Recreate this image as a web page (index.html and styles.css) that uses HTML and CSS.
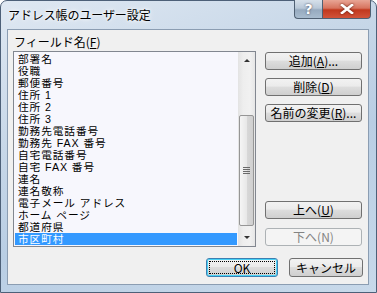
FILE: index.html
```html
<!DOCTYPE html>
<html lang="ja">
<head>
    <meta charset="utf-8">
    <title>アドレス帳のユーザー設定</title>
    <link rel="stylesheet" href="styles.css">
</head>
<body>
<div class="window">
    <div class="titlebar">
        <span class="title">アドレス帳のユーザー設定</span>
        <div class="caption-buttons">
            <span class="cap help">?</span>
            <span class="cap close">
                <svg width="14" height="10" viewBox="0 0 14 10">
                    <path d="M2 1 L12 9 M12 1 L2 9" stroke="#fff" stroke-width="2.6" stroke-linecap="square"/>
                </svg>
            </span>
        </div>
    </div>
    <div class="client">
        <div class="main">
            <div class="fields">
                <div class="label">フィールド名(<u>F</u>)</div>
                <div class="listbox">
                    <ul class="items">
                        <li>部署名</li>
                        <li>役職</li>
                        <li>郵便番号</li>
                        <li>住所 1</li>
                        <li>住所 2</li>
                        <li>住所 3</li>
                        <li>勤務先電話番号</li>
                        <li>勤務先 FAX 番号</li>
                        <li>自宅電話番号</li>
                        <li>自宅 FAX 番号</li>
                        <li>連名</li>
                        <li>連名敬称</li>
                        <li>電子メール アドレス</li>
                        <li>ホーム ページ</li>
                        <li>都道府県</li>
                        <li class="selected">市区町村</li>
                    </ul>
                    <div class="scrollbar">
                        <div class="arrow up"></div>
                        <div class="track">
                            <div class="thumb"><span class="grip"></span></div>
                        </div>
                        <div class="arrow down"></div>
                    </div>
                </div>
            </div>
            <div class="side">
                <div class="group">
                    <button class="btn">追加(<u>A</u>)...</button>
                    <button class="btn">削除(<u>D</u>)</button>
                    <button class="btn">名前の変更(<u>R</u>)...</button>
                </div>
                <div class="group move">
                    <button class="btn">上へ(<u>U</u>)</button>
                    <button class="btn" disabled>下へ(N)</button>
                </div>
            </div>
        </div>
        <div class="footer">
            <button class="btn default"><span class="focus">OK</span></button>
            <button class="btn cancel">キャンセル</button>
        </div>
    </div>
</div>
</body>
</html>
```
FILE: styles.css
```css
body {
    margin: 0;
    font-family: "Noto Sans CJK JP", "Noto Sans", sans-serif;
    font-size: 12px;
    color: #000;
}
.window {
    width: 377px;
    height: 293px;
    box-sizing: border-box;
    border: 1px solid #4d6078;
    border-radius: 7px 7px 0 0;
    background: linear-gradient(160deg, #dfe8f2 0%, #c7d7e8 35%, #b9cee4 60%, #c8d9ea 100%);
    display: flex;
    flex-direction: column;
}
.titlebar {
    height: 28px;
    display: flex;
    justify-content: space-between;
    align-items: flex-start;
}
.title {
    margin: 6px 0 0 7px;
    font-size: 12px;
    line-height: 16px;
    letter-spacing: -0.1px;
    text-shadow: 0 0 6px #fff, 0 0 3px #fff;
}
.caption-buttons {
    display: flex;
    margin-right: 5px;
    margin-top: -1px;
}
.cap {
    height: 19px;
    box-sizing: border-box;
    border: 1px solid #4f6073;
    border-top: none;
    display: flex;
    align-items: center;
    justify-content: center;
    color: #fff;
    font-weight: bold;
    font-size: 14px;
}
.help {
    width: 28px;
    border-radius: 0 0 0 4px;
    border-right: none;
    background: linear-gradient(#d6e0ea 0%, #b9c8d8 45%, #96aabf 55%, #a8bccf 100%);
    text-shadow: 0 0 2px #334;
    font-family: "DejaVu Sans", sans-serif;
}
.close {
    width: 49px;
    border-radius: 0 0 4px 0;
    background: linear-gradient(#e8a595 0%, #d7745f 45%, #c1381d 55%, #d2533a 100%);
}
.close svg {
    filter: drop-shadow(0 0 1px #5a1a10);
}
.client {
    flex: 1;
    margin: 0 7px 7px 6px;
    border: 1px solid #8b9db2;
    background: #f0f0f0;
    display: flex;
    flex-direction: column;
    padding: 0 5px 0 5px;
}
.main {
    display: flex;
}
.fields {
    width: 243px;
}
.label {
    margin-top: 5px;
    height: 14px;
    line-height: 14px;
    margin-bottom: 2px;
    padding-left: 1px;
}
.listbox {
    height: 196px;
    box-sizing: border-box;
    border: 1px solid #828790;
    background: #f7f7fd;
    display: flex;
}
.items {
    list-style: none;
    margin: 0;
    padding: 1px 1px 0 1px;
    flex: 1;
}
.items li {
    height: 12px;
    line-height: 12px;
    padding-left: 3px;
    font-family: "Liberation Sans", "Noto Sans CJK JP", sans-serif;
    font-size: 10.7px;
    letter-spacing: 0.9px;
    white-space: nowrap;
}
.items li.selected {
    background: #3399ff;
    color: #fff;
}
.scrollbar {
    width: 17px;
    display: flex;
    flex-direction: column;
    background: linear-gradient(90deg, #e3e3e3, #eeeeee 30%, #f1f1f1 70%, #e6e6e6);
}
.arrow {
    height: 17px;
    display: flex;
    align-items: center;
    justify-content: center;
}
.arrow::before {
    content: "";
    border-left: 3px solid transparent;
    border-right: 3px solid transparent;
}
.arrow.up::before {
    border-bottom: 3px solid #333;
}
.arrow.down::before {
    border-top: 3px solid #333;
}
.track {
    flex: 1;
    display: flex;
    flex-direction: column;
    justify-content: flex-end;
    padding-bottom: 3px;
}
.thumb {
    height: 111px;
    margin: 0 1px;
    box-sizing: border-box;
    border: 1px solid #969696;
    border-radius: 2px;
    background: linear-gradient(90deg, #f5f5f5, #e8e8e8 50%, #d8d8d8 52%, #d0d0d0);
    display: flex;
    align-items: center;
    justify-content: center;
}
.grip {
    width: 7px;
    height: 7px;
    background: repeating-linear-gradient(#6a6a6a 0 1px, transparent 1px 2px);
}
.side {
    width: 97px;
    margin-left: 9px;
    padding-top: 22px;
    display: flex;
    flex-direction: column;
    justify-content: space-between;
}
.group {
    display: flex;
    flex-direction: column;
    gap: 8px;
}
.group.move {
    gap: 9px;
    margin-bottom: 1px;
}
.btn {
    height: 18px;
    padding: 0;
    box-sizing: border-box;
    border: 1px solid #707070;
    border-radius: 3px;
    background: linear-gradient(#f2f2f2 0%, #ebebeb 45%, #dddddd 50%, #cfcfcf 100%);
    font-family: inherit;
    font-size: 12px;
    line-height: 14px;
    color: #000;
}
.btn u {
    text-underline-offset: 1px;
}
.btn:disabled {
    border-color: #adb2b5;
    background: #f4f4f4;
    color: #838383;
}
.footer {
    margin-top: 11px;
    display: flex;
    justify-content: flex-end;
    gap: 11px;
}
.footer .btn {
    height: 19px;
}
.default {
    width: 72px;
    border-color: #3c7fb1;
    box-shadow: inset 0 0 0 1px #48d2f6;
    padding: 2px;
}
.focus {
    display: block;
    height: 100%;
    box-sizing: border-box;
    border: 1px dotted #000;
    line-height: 11px;
}
.cancel {
    width: 74px;
}
```
